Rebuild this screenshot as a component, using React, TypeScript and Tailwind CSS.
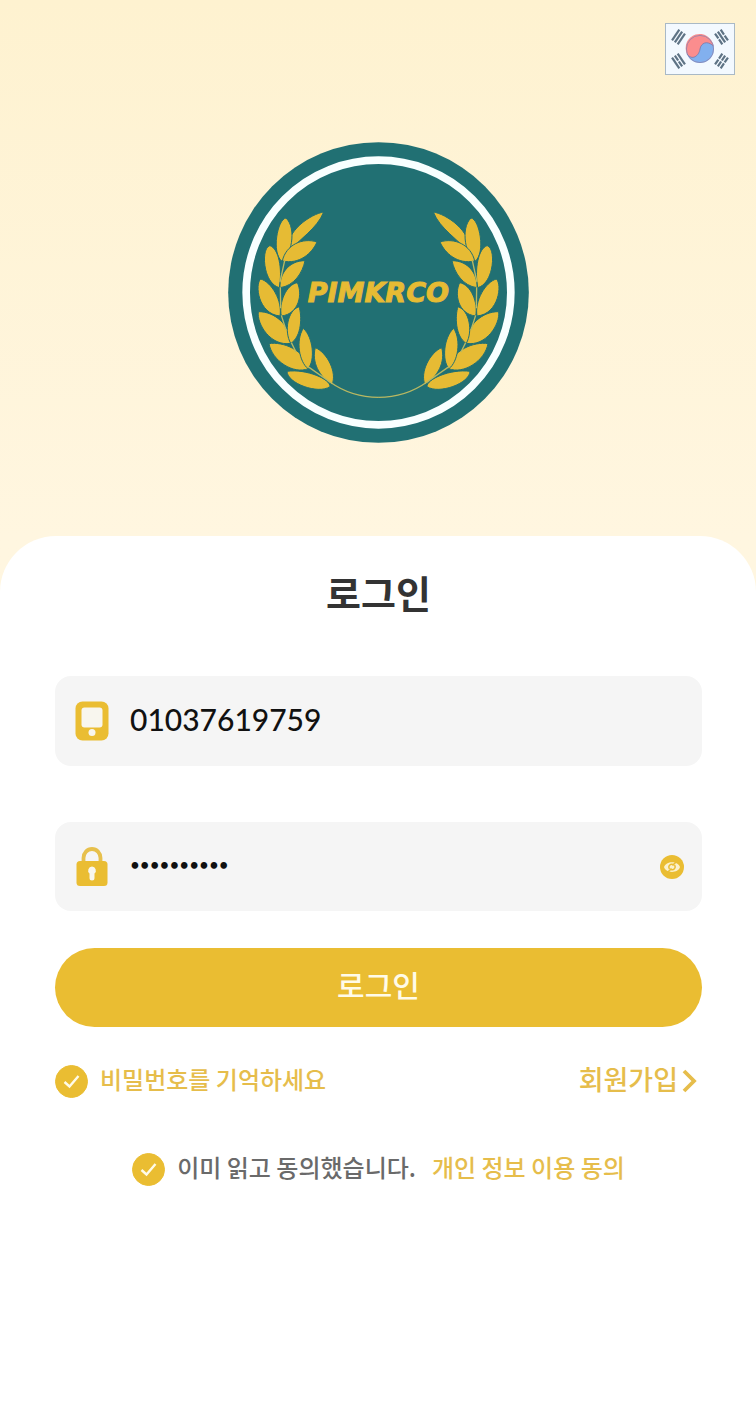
import { useState } from "react";

const LEAVES = [
  "M221 36C184 42 104 92 112 160C144 120 202 86 221 36Z",
  "M108 54C82 58 64 158 95 183C122 174 142 86 108 54Z",
  "M201 126C158 112 108 134 97 183C148 194 186 160 201 126Z",
  "M60 137C32 142 38 250 88 263C98 206 86 146 60 137Z",
  "M165 182C116 182 88 222 90 263C132 258 158 218 165 182Z",
  "M32 237C14 252 24 342 90 348C98 302 64 246 32 237Z",
  "M142 248C108 254 86 308 94 348C148 342 158 280 142 248Z",
  "M25 335C20 372 62 440 122 430C122 374 72 334 25 335Z",
  "M147 320C112 332 102 394 122 430C156 410 156 346 147 320Z",
  "M57 431C66 482 130 524 175 506C166 450 98 424 57 431Z",
  "M160 385C136 422 148 486 174 506C196 482 190 412 160 385Z",
  "M111 514C112 550 204 584 240 560C242 538 170 506 111 514Z",
  "M196 443C184 486 208 530 246 554C262 518 232 458 196 443Z",
];

function Branch() {
  return (
    <g transform="translate(66 174)">
      {LEAVES.map((d) => (
        <path key={d} d={d} fill="#e6bb34" stroke="#217073" strokeWidth="3" />
      ))}
      <path
        d="M104 182L90 246M91 262L92 325M94 346L108 390M124 428L138 456M174 500L240 546C285 578 332 592 386 592"
        fill="none"
        stroke="#b9b862"
        strokeWidth="4"
      />
    </g>
  );
}

function Logo() {
  return (
    <svg viewBox="0 0 903 903" className="size-[301px]" role="img" aria-label="PIMKRCO">
      <circle cx="451.5" cy="451.5" r="451" fill="#217073" />
      <circle cx="451.5" cy="451.5" r="397" fill="none" stroke="#f8ffff" strokeWidth="23" />
      <Branch />
      <g transform="translate(903 0) scale(-1 1)">
        <Branch />
      </g>
      <text
        x="451"
        y="480"
        textAnchor="middle"
        fontSize="81"
        fontStyle="italic"
        fontWeight="700"
        fontFamily="'DejaVu Sans', sans-serif"
        fill="#e6bb34"
        stroke="#e6bb34"
        strokeWidth="3"
      >
        PIMKRCO
      </text>
    </svg>
  );
}

function Trigram({ x, y, angle, broken }: { x: number; y: number; angle: number; broken: boolean[] }) {
  return (
    <g transform={`translate(${x} ${y}) rotate(${angle})`} stroke="#5e7385" strokeWidth="2.2">
      {broken.map((split, i) => (
        <path key={i} d={split ? "M-6.5 0H-0.6M0.6 0H6.5" : "M-6.5 0H6.5"} transform={`translate(0 ${(i - 1) * 3.4})`} />
      ))}
    </g>
  );
}

function KoreanFlag() {
  return (
    <svg viewBox="0 0 70 52" className="h-[52px] w-[70px]" aria-hidden="true">
      <rect x="0.5" y="0.5" width="69" height="51" fill="#f3f9ff" stroke="#a9b9c6" />
      <circle cx="35" cy="26" r="14" fill="#82b0ee" />
      <path d="M22 31A14 14 0 1 1 48.500 23C42 17 36 20 35 26C34 33 27 38 22 31Z" fill="#fb8d8e" />
      <path d="M22 31C27 38 34 33 35 26C36 20 42 17 48.500 23" fill="none" stroke="#7a78a8" strokeWidth="0.8" />
      <circle cx="35" cy="26" r="13.6" fill="none" stroke="#8a83ae" strokeWidth="0.8" />
      <Trigram x={13.5} y={14} angle={-56} broken={[false, false, false]} />
      <Trigram x={56.5} y={14} angle={56} broken={[true, false, true]} />
      <Trigram x={13.5} y={38} angle={56} broken={[false, true, false]} />
      <Trigram x={56.5} y={38} angle={-56} broken={[true, true, true]} />
    </svg>
  );
}

function PhoneIcon() {
  return (
    <svg viewBox="0 0 34 40" className="h-10 w-[34px] shrink-0" aria-hidden="true">
      <rect x="0.5" y="0.5" width="33" height="39" rx="7" fill="#eabd32" />
      <rect x="6.5" y="6.5" width="21" height="20" rx="3" fill="#f8f6ee" />
      <circle cx="17" cy="31.5" r="3.5" fill="#f8f6ee" />
    </svg>
  );
}

function LockIcon() {
  return (
    <svg viewBox="0 0 34 40" className="h-10 w-[34px] shrink-0" aria-hidden="true">
      <path d="M8.5 16V11a8.500 9 0 0 1 17 0V16" fill="none" stroke="#e7c04c" strokeWidth="3.8" />
      <rect x="1.5" y="14" width="31" height="25" rx="3.5" fill="#eabd32" />
      <path d="M17 19.500a4 4 0 0 1 2.500 7V31a2.500 2.500 0 0 1-5 0V26.500A4 4 0 0 1 17 19.500Z" fill="#f8f6ee" />
    </svg>
  );
}

function EyeIcon() {
  return (
    <svg viewBox="0 0 24 24" className="size-6" aria-hidden="true">
      <circle cx="12" cy="12" r="12" fill="#eabd32" />
      <path d="M4 12C6 5.500 18 5.500 20 12C18 18.500 6 18.500 4 12Z" fill="#fbf1cd" />
      <path d="M16 7L12.500 10.500M11.500 13.500L8 17" stroke="#eabd32" strokeWidth="1.6" />
      <path d="M9.500 14C7.500 11 10.500 8.500 13 9.500M14.500 10C16.500 13 13.500 15.500 11 14.500" fill="none" stroke="#eabd32" strokeWidth="1.4" />
    </svg>
  );
}

function RoundCheck({ id }: { id: string }) {
  return (
    <span className="relative grid size-[33px] shrink-0 place-items-center">
      <input
        id={id}
        type="checkbox"
        defaultChecked
        className="peer size-[33px] appearance-none rounded-full border border-[#eabd32] checked:bg-[#eabd32]"
      />
      <svg viewBox="0 0 33 33" className="pointer-events-none absolute inset-0 hidden peer-checked:block" aria-hidden="true">
        <path d="M9.500 17L14.500 21.500L23.500 11" fill="none" stroke="#fffbe8" strokeWidth="2.4" />
      </svg>
    </span>
  );
}

const FIELD = "flex items-center gap-[21px] rounded-2xl bg-[#f5f5f5] pr-[18px] pl-5";
const INPUT = "min-w-0 flex-1 bg-transparent pb-1 font-['Lato','Noto_Sans_CJK_KR',sans-serif] font-medium text-[#111] outline-none";

export default function App() {
  const [visible, setVisible] = useState(false);

  return (
    <div className="flex min-h-screen flex-col bg-linear-to-b from-[#fef2d0] to-[#fff6e0] to-[536px] font-['Noto_Sans_CJK_KR',sans-serif]">
      <header className="flex justify-end px-[21px] pt-[23px]">
        <button type="button" aria-label="한국어">
          <KoreanFlag />
        </button>
      </header>
      <div className="flex justify-center pt-[67px] pb-[93px]">
        <Logo />
      </div>
      <main className="flex-1 rounded-t-[56px] bg-white pt-7 pr-[54px] pl-[55px]">
        <h1 className="text-center text-[38px] leading-14 font-bold text-[#333]">로그인</h1>
        <form className="mt-14" onSubmit={(e) => e.preventDefault()}>
          <div className={`${FIELD} h-[90px]`}>
            <label htmlFor="phone" aria-label="전화번호">
              <PhoneIcon />
            </label>
            <input id="phone" type="tel" defaultValue="01037619759" className={`${INPUT} text-[30px]`} />
          </div>
          <div className={`${FIELD} mt-14 h-[89px]`}>
            <label htmlFor="password" aria-label="비밀번호">
              <LockIcon />
            </label>
            <input
              id="password"
              type={visible ? "text" : "password"}
              defaultValue="abcdefghij"
              className={`${INPUT} text-[17px]`}
            />
            <button type="button" aria-label="비밀번호 표시" onClick={() => setVisible(!visible)}>
              <EyeIcon />
            </button>
          </div>
          <button type="submit" className="mt-[37px] h-[79px] w-full rounded-full bg-[#eabd32] pb-2 text-[30px] leading-10 font-medium text-[#fffbe8]">
            로그인
          </button>
          <div className="mt-8 flex items-center justify-between">
            <label htmlFor="remember" className="flex items-center gap-3 text-2xl font-medium text-[#e6bd4b]">
              <RoundCheck id="remember" />
              <span className="pb-1">비밀번호를 기억하세요</span>
            </label>
            <a href="#signup" className="flex items-center gap-1 pr-1 text-[27px] leading-10 font-medium text-[#e6bd4b]">
              <span className="pb-1">회원가입</span>
              <svg viewBox="0 0 16 24" className="h-6 w-4" aria-hidden="true">
                <path d="M2 2L12 12L2 22" fill="none" stroke="#e6bd4b" strokeWidth="3.8" />
              </svg>
            </a>
          </div>
          <div className="mt-12 flex items-center justify-center gap-4 text-2xl">
            <label htmlFor="agree" className="flex items-center gap-3 font-medium text-[#6a6a6a]">
              <RoundCheck id="agree" />
              <span className="pb-1">이미 읽고 동의했습니다.</span>
            </label>
            <a href="#privacy" className="pb-1 font-medium text-[#e6bd4b]">
              개인 정보 이용 동의
            </a>
          </div>
        </form>
      </main>
    </div>
  );
}
